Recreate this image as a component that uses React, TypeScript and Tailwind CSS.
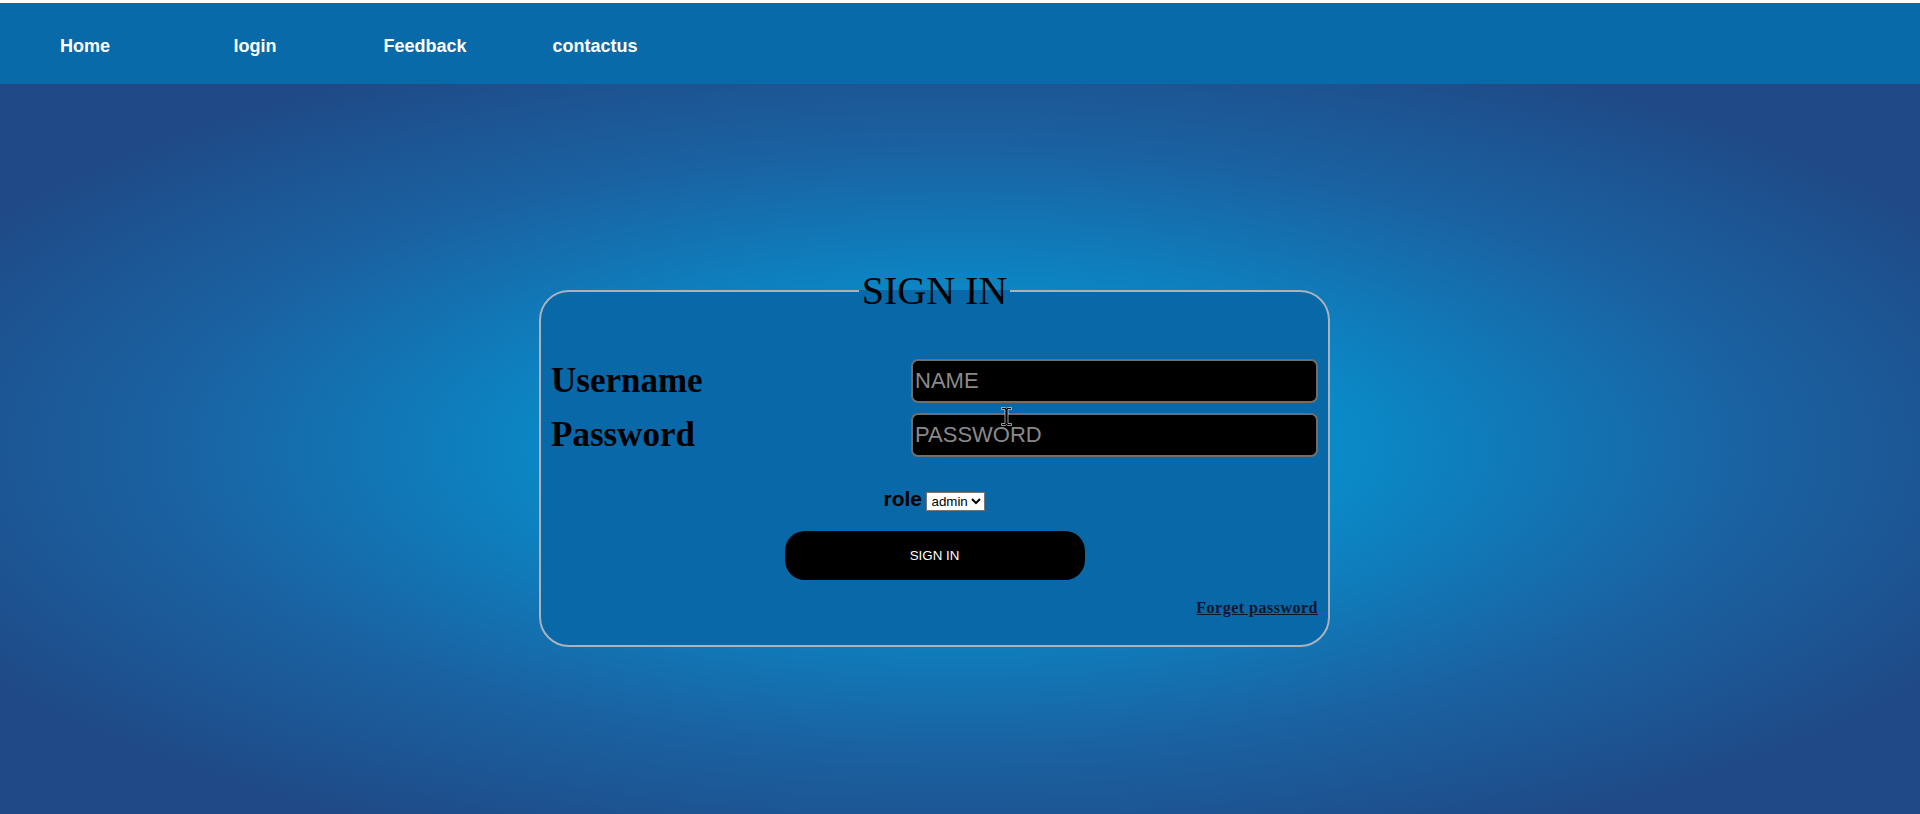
import React from "react";

const navItems = ["Home", "login", "Feedback", "contactus"];

export default function App() {
  return (
    <div className="relative w-full min-h-screen bg-white font-['Liberation_Sans',Arial,sans-serif]">
      <div className="h-[3px] bg-white" />
      <nav className="h-[81px] bg-[#086aa8] flex">
        {navItems.map((t) => (
          <a
            key={t}
            href="#"
            className="block w-[170px] text-center pt-[33px] text-[18px] leading-[21px] font-bold text-white no-underline"
          >
            {t}
          </a>
        ))}
      </nav>
      <main className="h-[730px] overflow-hidden pt-[184px] bg-[radial-gradient(ellipse_at_50%_50%,#0893d0_0%,#0a8ac8_28%,#1a62a2_58%,#1f4a87_84%)]">
        <fieldset className="ml-[539px] w-[791px] bg-[#0868a8] border-2 border-[#aab3bd] rounded-[30px] px-[10px] pb-[27px] pt-0 m-0">
          <legend className="mx-auto px-[3px] font-['Liberation_Serif','Times_New_Roman',serif] text-[40px] leading-[46px] text-black">
            SIGN IN
          </legend>
          <div className="mt-[45px] grid grid-cols-[360px_1fr] gap-y-[10px]">
            <label className="h-[44px] flex items-center pt-[1px] font-['Liberation_Serif','Times_New_Roman',serif] font-bold text-[35px] text-black">
              Username
            </label>
            <input
              type="text"
              placeholder="NAME"
              className="h-[44px] w-full bg-black border-2 border-[#6f6f6f] rounded-[7px] px-[2px] text-[22px] text-white placeholder:text-[#8a8a8a] outline-none font-['Liberation_Sans',Arial,sans-serif]"
            />
            <label className="h-[44px] flex items-center pt-[1px] font-['Liberation_Serif','Times_New_Roman',serif] font-bold text-[35px] text-black">
              Password
            </label>
            <input
              type="password"
              placeholder="PASSWORD"
              className="h-[44px] w-full bg-black border-2 border-[#6f6f6f] rounded-[7px] px-[2px] text-[22px] text-white placeholder:text-[#8a8a8a] outline-none font-['Liberation_Sans',Arial,sans-serif]"
            />
          </div>
          <div className="mt-[30px] text-center leading-[24px]">
            <span className="text-[21px] font-bold text-black">role</span>{" "}
            <select className="w-[59px] h-[19px] bg-white text-black text-[13.33px] border border-[#767676] align-baseline">
              <option>admin</option>
              <option>user</option>
            </select>
          </div>
          <button
            type="button"
            className="block mx-auto mt-[18px] w-[300px] h-[49px] bg-black text-white rounded-[20px] text-[13.33px] font-['Liberation_Sans',Arial,sans-serif]"
          >
            SIGN IN
          </button>
          <div className="mt-[18px] text-right leading-[20px]">
            <a
              href="#"
              className="font-['Liberation_Serif','Times_New_Roman',serif] font-bold text-[16px] tracking-[0.5px] text-[#0b1730] underline"
            >
              Forget password
            </a>
          </div>
        </fieldset>
      </main>
      <svg
        className="absolute left-[1001px] top-[407px] pointer-events-none"
        width="11"
        height="19"
        viewBox="0 0 11 19"
      >
        <path
          d="M0.5 0.5 h4 l1 1 l1 -1 h4 v2 h-3.5 v14 h3.5 v2 h-4 l-1 -1 l-1 1 h-4 v-2 h3.5 v-14 h-3.5 z"
          fill="#000"
          stroke="#fff"
          strokeWidth="0.6"
        />
      </svg>
    </div>
  );
}
